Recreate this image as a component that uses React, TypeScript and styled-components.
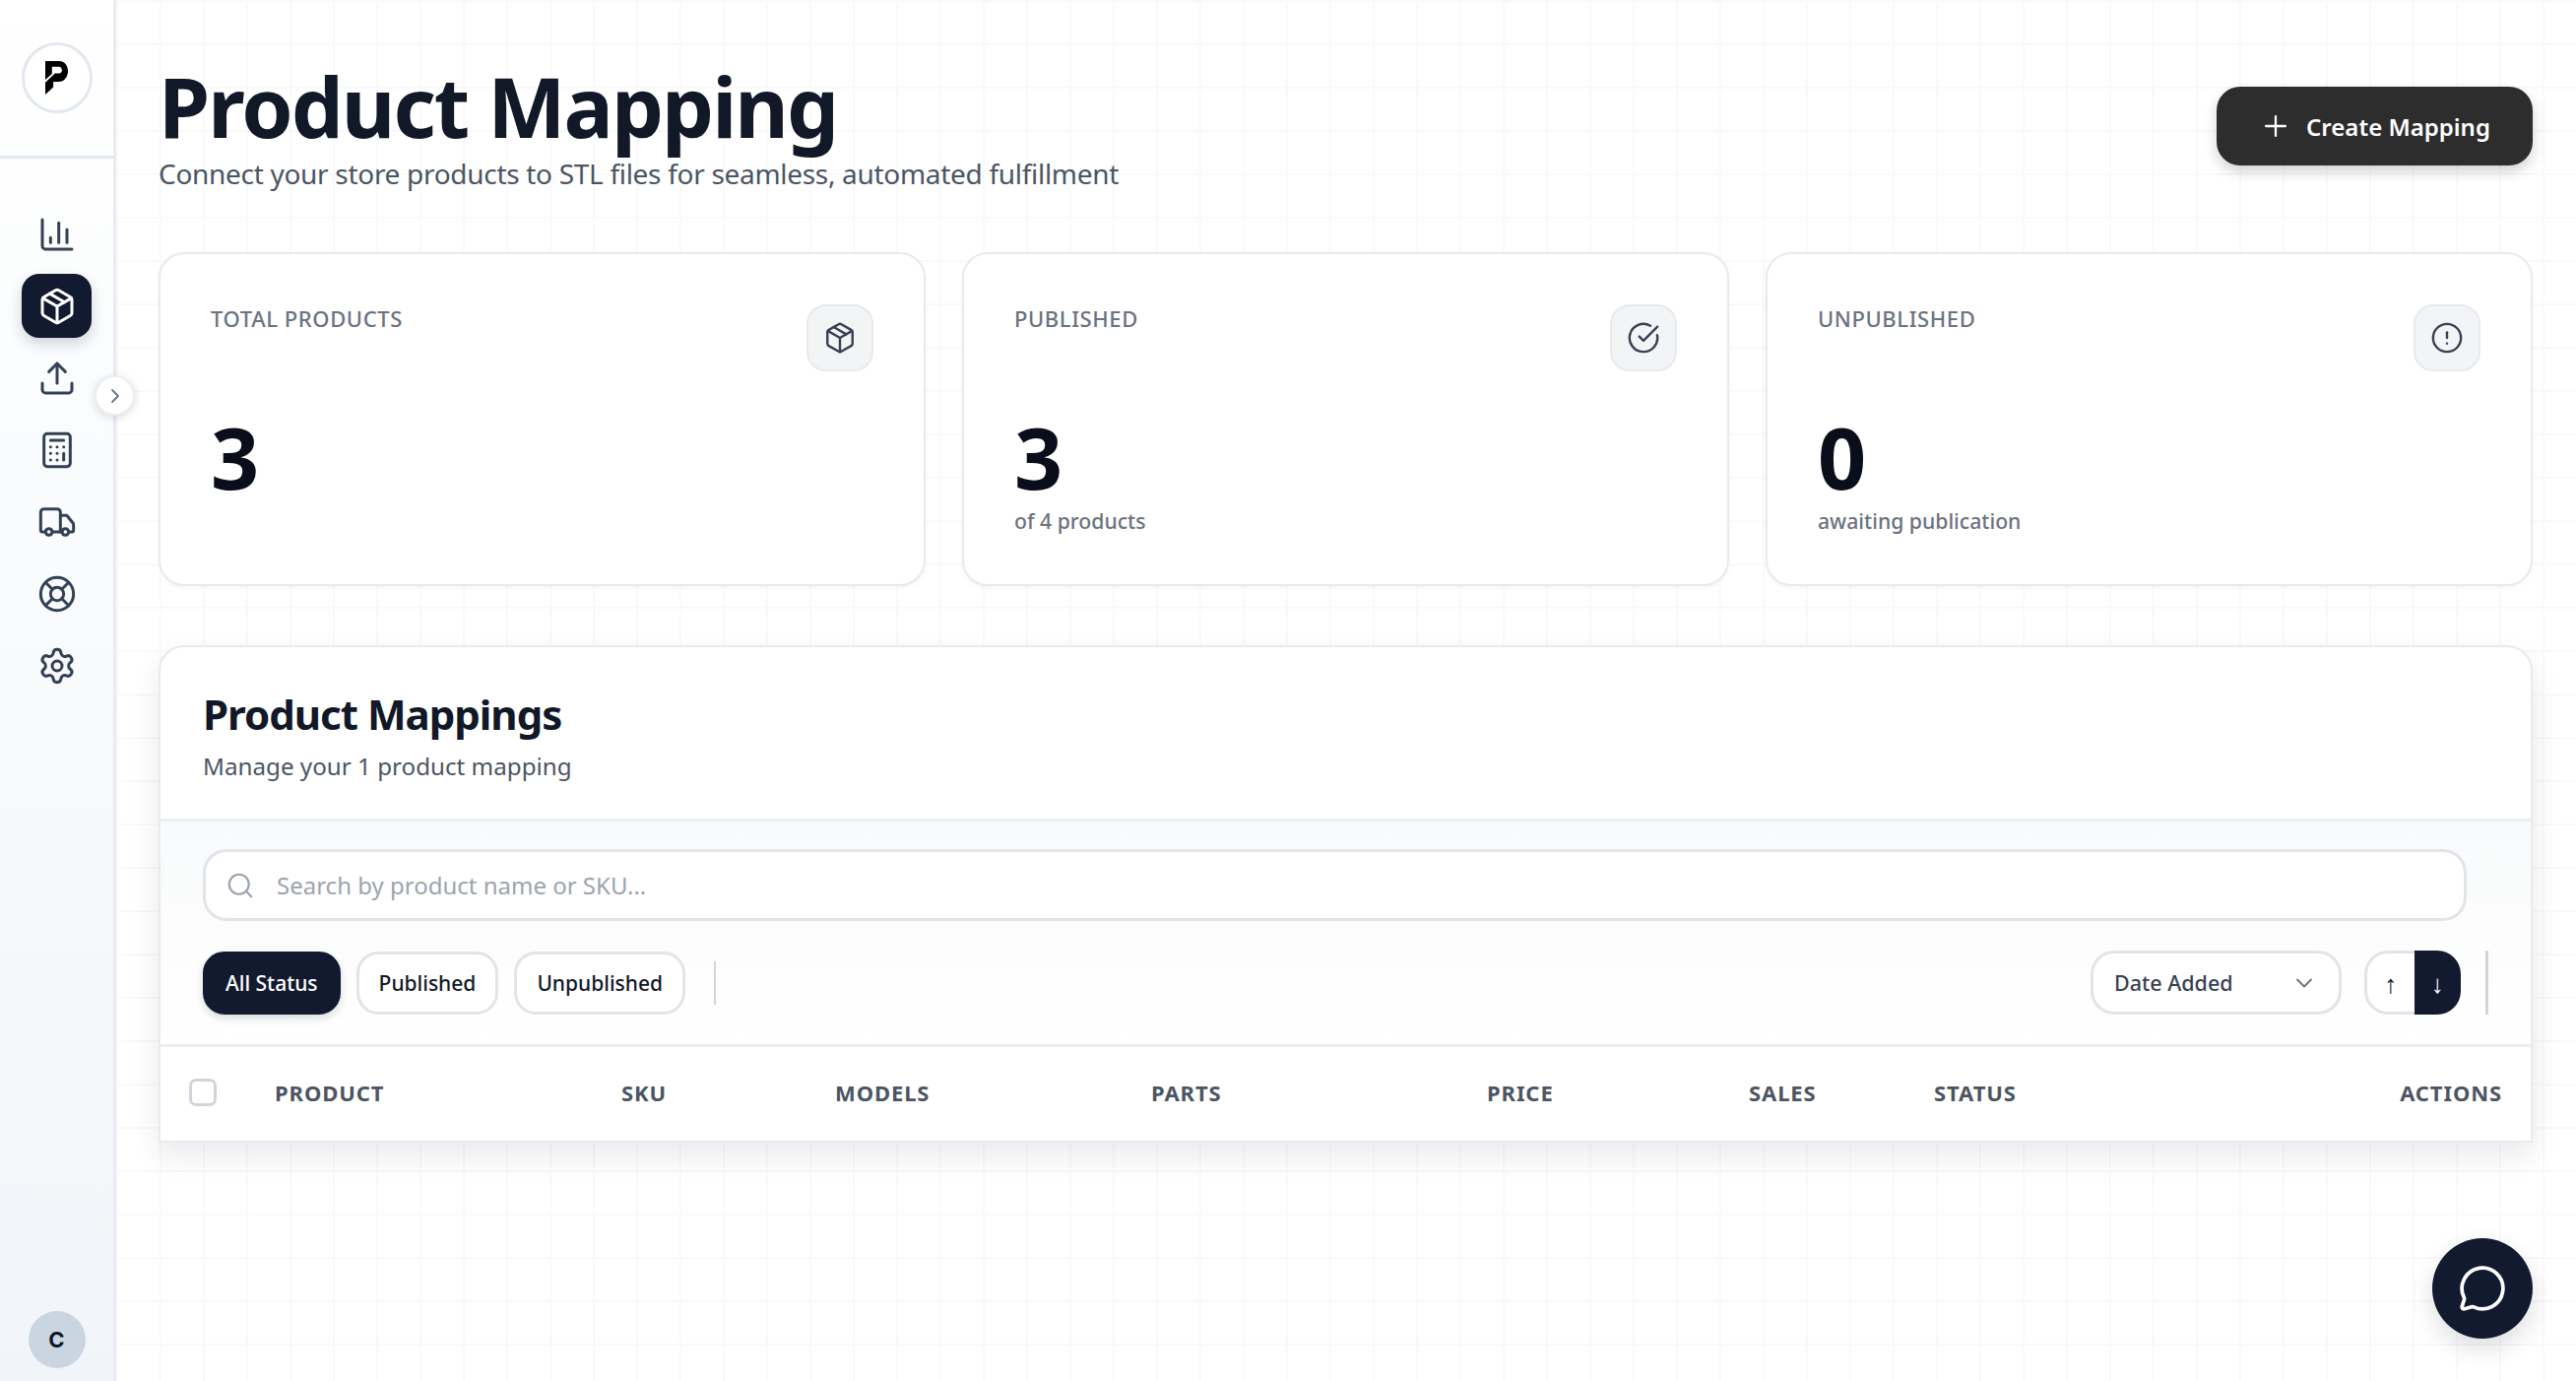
import styled, { createGlobalStyle } from 'styled-components';
import {
  ChartColumn,
  Package,
  Upload,
  Calculator,
  Truck,
  LifeBuoy,
  Settings,
  ChevronRight,
  ChevronDown,
  Plus,
  Search,
  CircleCheckBig,
  CircleAlert,
  MessageCircle,
} from 'lucide-react';

const FONT = '"Noto Sans", "Open Sans", sans-serif';

const GlobalStyle = createGlobalStyle`
  * { box-sizing: border-box; }
  html, body { margin: 0; height: 100%; }
  body { font-family: ${FONT}; background: #fff; color: #111827; }
  #root { height: 100%; }
`;

const Shell = styled.div`
  display: flex;
  height: 1402px;
  overflow: hidden;
`;

const Sidebar = styled.aside`
  position: relative;
  flex: 0 0 118px;
  display: flex;
  flex-direction: column;
  border-right: 3px solid #e8ecf2;
  background: linear-gradient(180deg, #ffffff 0%, #f1f5f9 100%);
`;

const LogoArea = styled.div`
  height: 161px;
  display: flex;
  align-items: center;
  justify-content: center;
  border-bottom: 3px solid #e2e8f0;
`;

const LogoCircle = styled.div`
  width: 72px;
  height: 72px;
  border-radius: 50%;
  background: #fff;
  border: 3px solid #e2e8f0;
  display: flex;
  align-items: center;
  justify-content: center;
`;

const Nav = styled.nav`
  display: flex;
  flex-direction: column;
  align-items: center;
  gap: 8px;
  padding-top: 44px;
  flex: 1;
`;

const NavItem = styled.div<{ $active?: boolean }>`
  width: 71px;
  height: 65px;
  border-radius: 18px;
  display: flex;
  align-items: center;
  justify-content: center;
  color: ${({ $active }) => ($active ? '#fff' : '#334155')};
  background: ${({ $active }) => ($active ? '#111a2e' : 'transparent')};
  box-shadow: ${({ $active }) => ($active ? '0 6px 14px rgba(15, 23, 42, 0.18)' : 'none')};
`;

const CollapseButton = styled.button`
  position: absolute;
  top: 381px;
  left: 96px;
  width: 41px;
  height: 41px;
  border: 2px solid #eceef1;
  border-radius: 50%;
  background: #fff;
  color: #64748b;
  padding: 0;
  display: flex;
  align-items: center;
  justify-content: center;
  box-shadow: 0 2px 8px rgba(15, 23, 42, 0.14);
`;

const AvatarRow = styled.div`
  display: flex;
  justify-content: center;
  padding-bottom: 13px;
`;

const Avatar = styled.div`
  width: 58px;
  height: 58px;
  border-radius: 50%;
  background: #cbd5e1;
  color: #0f172a;
  font-family: Inter, sans-serif;
  font-weight: 700;
  font-size: 22px;
  display: flex;
  align-items: center;
  justify-content: center;
`;

const Main = styled.main`
  flex: 1;
  padding: 0 44px 0 43px;
  background-color: #fff;
  background-image:
    linear-gradient(to right, #f9f9fa 2px, transparent 2px),
    linear-gradient(to bottom, #f9f9fa 2px, transparent 2px);
  background-size: 44px 44px;
`;

const Header = styled.header`
  display: flex;
  justify-content: space-between;
  align-items: flex-start;
  padding-top: 60px;
  height: 256px;
`;

const TitleBlock = styled.div`
  display: flex;
  flex-direction: column;
`;

const Title = styled.h1`
  margin: 0;
  font-size: 84px;
  line-height: 96px;
  font-weight: 700;
  letter-spacing: -1.95px;
  color: #111827;
`;

const Subtitle = styled.p`
  margin: 0;
  font-size: 28px;
  line-height: 40px;
  letter-spacing: -0.3px;
  color: #4b5563;
`;

const CreateButton = styled.button`
  margin-top: 28px;
  width: 321px;
  height: 80px;
  border: none;
  border-radius: 24px;
  background: #2d2d2d;
  color: #fff;
  font-family: ${FONT};
  font-size: 24px;
  font-weight: 600;
  display: flex;
  align-items: center;
  justify-content: center;
  gap: 14px;
  box-shadow: 0 6px 14px rgba(0, 0, 0, 0.18);
`;

const Stats = styled.section`
  display: grid;
  grid-template-columns: repeat(3, 1fr);
  gap: 37px;
  height: 339px;
`;

const StatCard = styled.article`
  background: #fff;
  border: 2px solid #e8eaee;
  border-radius: 26px;
  padding: 51px 51px 0 51px;
  box-shadow: 0 2px 4px rgba(0, 0, 0, 0.04);
`;

const StatTop = styled.div`
  display: flex;
  justify-content: space-between;
  align-items: flex-start;
  height: 68px;
`;

const StatLabel = styled.span`
  font-size: 22px;
  line-height: 28px;
  letter-spacing: 0.6px;
  color: #6b7280;
  font-weight: 500;
  text-transform: uppercase;
`;

const StatIcon = styled.div`
  width: 68px;
  height: 68px;
  border-radius: 20px;
  border: 2px solid #e8eaee;
  background: #f3f4f6;
  color: #374151;
  display: flex;
  align-items: center;
  justify-content: center;
`;

const StatValue = styled.div`
  font-size: 86px;
  line-height: 101px;
  font-weight: 700;
  color: #0a0e1a;
  margin-top: 36px;
`;

const StatNote = styled.div`
  font-size: 21.2px;
  line-height: 30px;
  color: #6b7280;
  font-weight: 500;
`;

const Panel = styled.section`
  margin-top: 60px;
  background: #fff;
  border: 2px solid #e8eaee;
  border-radius: 26px 26px 0 0;
  box-shadow: 0 14px 30px rgba(15, 23, 42, 0.09);
`;

const PanelHead = styled.div`
  height: 177px;
  padding: 35px 43px 0;
  border-bottom: 3px solid #eceef1;
`;

const PanelTitle = styled.h2`
  margin: 0;
  font-size: 42px;
  line-height: 66px;
  font-weight: 700;
  letter-spacing: -1px;
  color: #111827;
`;

const PanelSub = styled.p`
  margin: 0;
  font-size: 24.2px;
  line-height: 40px;
  color: #4b5563;
`;

const Toolbar = styled.div`
  height: 229px;
  padding: 28px 43px 0 43px;
  display: flex;
  flex-direction: column;
  gap: 30px;
  border-bottom: 3px solid #eceef1;
  background: linear-gradient(180deg, #f9fafb 0%, #ffffff 100%);
`;

const SearchBox = styled.div`
  height: 73px;
  margin-right: 22px;
  border: 3px solid #e2e4e9;
  border-radius: 24px;
  background: #fff;
  display: flex;
  align-items: center;
  gap: 20px;
  padding-left: 20px;
  color: #9ca3af;
`;

const SearchInput = styled.input`
  flex: 1;
  border: none;
  outline: none;
  background: transparent;
  font-family: ${FONT};
  font-size: 24px;
  color: #111827;

  &::placeholder {
    color: #9ca3af;
  }
`;

const ControlRow = styled.div`
  display: flex;
  align-items: center;
  height: 65px;
`;

const FilterGroup = styled.div`
  display: flex;
  align-items: center;
  gap: 16px;
`;

const FilterChip = styled.button<{ $active?: boolean }>`
  height: 64px;
  padding: 0 20px;
  border-radius: 22px;
  font-family: ${FONT};
  font-size: 21px;
  font-weight: 500;
  border: 3px solid ${({ $active }) => ($active ? '#111a2e' : '#e2e4e9')};
  background: ${({ $active }) => ($active ? '#111a2e' : '#fff')};
  color: ${({ $active }) => ($active ? '#fff' : '#111827')};
  box-shadow: ${({ $active }) => ($active ? '0 4px 8px rgba(15, 23, 42, 0.15)' : 'none')};
`;

const ThinRule = styled.span`
  width: 2px;
  height: 44px;
  background: #d1d5db;
  margin-left: 29px;
`;

const Spacer = styled.div`
  flex: 1;
`;

const SortSelect = styled.div`
  width: 255px;
  height: 65px;
  border: 3px solid #e2e4e9;
  border-radius: 24px;
  background: #fff;
  padding: 0 21px 0 21px;
  display: flex;
  align-items: center;
  justify-content: space-between;
  font-size: 21.5px;
  font-weight: 500;
  color: #374151;
`;

const SortToggle = styled.div`
  display: flex;
  width: 98px;
  height: 65px;
  margin-left: 23px;
`;

const SortButton = styled.span<{ $active?: boolean }>`
  flex: 1;
  display: flex;
  align-items: center;
  justify-content: center;
  font-size: 26px;
  border: ${({ $active }) => ($active ? 'none' : '3px solid #e2e4e9')};
  border-right: none;
  border-radius: ${({ $active }) => ($active ? '0 24px 24px 0' : '24px 0 0 24px')};
  background: ${({ $active }) => ($active ? '#111a2e' : '#fff')};
  color: ${({ $active }) => ($active ? '#fff' : '#111827')};
`;

const ThickRule = styled.span`
  width: 3px;
  height: 65px;
  background: #d1d5db;
  margin-left: 25px;
`;

const TableHeader = styled.div`
  height: 95px;
  padding: 0 29px 3px 29px;
  display: grid;
  grid-template-columns: 87px 352px 217px 321px 341px 266px 188px 1fr auto;
  align-items: center;
`;

const Checkbox = styled.span`
  width: 28px;
  height: 28px;
  border: 3px solid #d1d5db;
  border-radius: 7px;
  background: #fff;
`;

const ColumnLabel = styled.span`
  font-size: 22px;
  font-weight: 700;
  letter-spacing: 0.9px;
  color: #4b5563;
  text-transform: uppercase;
`;

const ChatButton = styled.button`
  position: fixed;
  right: 44px;
  bottom: 43px;
  width: 102px;
  height: 102px;
  border: none;
  border-radius: 50%;
  background: #111a2e;
  color: #fff;
  display: flex;
  align-items: center;
  justify-content: center;
  box-shadow: 0 10px 24px rgba(15, 23, 42, 0.14);
`;

const navIcons = [ChartColumn, Package, Upload, Calculator, Truck, LifeBuoy, Settings];

const stats = [
  { label: 'Total Products', value: '3', note: '', Icon: Package },
  { label: 'Published', value: '3', note: 'of 4 products', Icon: CircleCheckBig },
  { label: 'Unpublished', value: '0', note: 'awaiting publication', Icon: CircleAlert },
];

const columns = ['Product', 'SKU', 'Models', 'Parts', 'Price', 'Sales', 'Status', 'Actions'];

const App = () => {
  return (
    <Shell>
      <GlobalStyle />
      <Sidebar>
        <LogoArea>
          <LogoCircle>
            <svg width="23" height="34" viewBox="0 0 68 100" fill="#000">
              <path d="M0 0H42C58 0 68 13 68 30C68 47 57 62 40 62H24V78L0 100V64L29 37H40C46 37 50 34 50 28C50 21 46 17 40 17H20V38L0 56Z" />
            </svg>
          </LogoCircle>
        </LogoArea>
        <Nav>
          {navIcons.map((Icon, i) => (
            <NavItem key={i} $active={i === 1}>
              <Icon size={40} strokeWidth={1.8} />
            </NavItem>
          ))}
        </Nav>
        <AvatarRow>
          <Avatar>C</Avatar>
        </AvatarRow>
        <CollapseButton>
          <ChevronRight size={24} strokeWidth={1.8} />
        </CollapseButton>
      </Sidebar>
      <Main>
        <Header>
          <TitleBlock>
            <Title>Product Mapping</Title>
            <Subtitle>Connect your store products to STL files for seamless, automated fulfillment</Subtitle>
          </TitleBlock>
          <CreateButton>
            <Plus size={34} strokeWidth={1.6} />
            Create Mapping
          </CreateButton>
        </Header>
        <Stats>
          {stats.map(({ label, value, note, Icon }) => (
            <StatCard key={label}>
              <StatTop>
                <StatLabel>{label}</StatLabel>
                <StatIcon>
                  <Icon size={34} strokeWidth={1.7} />
                </StatIcon>
              </StatTop>
              <StatValue>{value}</StatValue>
              {note && <StatNote>{note}</StatNote>}
            </StatCard>
          ))}
        </Stats>
        <Panel>
          <PanelHead>
            <PanelTitle>Product Mappings</PanelTitle>
            <PanelSub>Manage your 1 product mapping</PanelSub>
          </PanelHead>
          <Toolbar>
            <SearchBox>
              <Search size={30} strokeWidth={1.7} />
              <SearchInput placeholder="Search by product name or SKU..." />
            </SearchBox>
            <ControlRow>
              <FilterGroup>
                <FilterChip $active>All Status</FilterChip>
                <FilterChip>Published</FilterChip>
                <FilterChip>Unpublished</FilterChip>
              </FilterGroup>
              <ThinRule />
              <Spacer />
              <SortSelect>
                Date Added
                <ChevronDown size={28} strokeWidth={1.6} color="#6b7280" />
              </SortSelect>
              <SortToggle>
                <SortButton>↑</SortButton>
                <SortButton $active>↓</SortButton>
              </SortToggle>
              <ThickRule />
            </ControlRow>
          </Toolbar>
          <TableHeader>
            <Checkbox />
            {columns.map((c) => (
              <ColumnLabel key={c}>{c}</ColumnLabel>
            ))}
          </TableHeader>
        </Panel>
      </Main>
      <ChatButton>
        <MessageCircle size={50} strokeWidth={1.8} />
      </ChatButton>
    </Shell>
  );
};

export default App;
